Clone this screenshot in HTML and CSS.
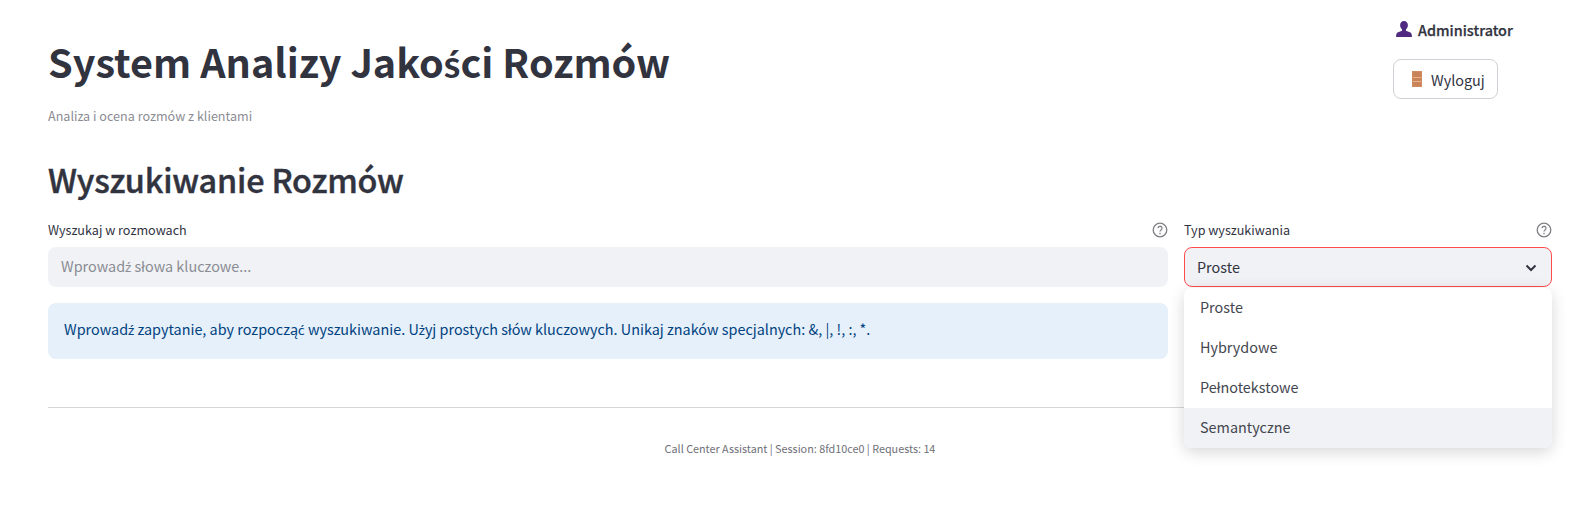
FILE: index.html
```html
<!DOCTYPE html>
<html lang="pl">
<head>
<meta charset="utf-8">
<title>System Analizy Jakości Rozmów</title>
<link rel="stylesheet" href="styles.css">
</head>
<body>
<main class="page">
  <header class="top">
    <div class="titles">
      <h1>System Analizy Jako<span class="dia">ś</span>ci Rozmów</h1>
      <p class="sub">Analiza i ocena rozmów z klientami</p>
    </div>
    <div class="user">
      <div class="who">
        <svg class="bust" viewBox="0 0 16 16"><path fill="#4f2a80" d="M8 0c2.400 0 3.900 1.800 3.900 4.200 0 1.700-.8 3.200-1.900 4.100v1.500l3.800 1.400c1.100.4 1.700 1.200 1.900 2.300l.3 2.500H0l.3-2.500c.2-1.100.8-1.900 1.900-2.300L6 9.800V8.300C4.900 7.400 4.100 5.900 4.100 4.200 4.100 1.800 5.600 0 8 0z"/></svg>
        <span>Administrator</span>
      </div>
      <button class="logout"><svg class="door" viewBox="0 0 10 16"><rect width="10" height="16" fill="#d08c62"/><rect x="1" y="1" width="8" height="14" fill="#c98358"/><rect x="1" y="6" width="8" height="1" fill="#e8b48c"/><rect x="1" y="10" width="8" height="1" fill="#e8b48c"/></svg>Wyloguj</button>
    </div>
  </header>
  <h2>Wyszukiwanie Rozmów</h2>
  <section class="search">
    <div class="col main">
      <div class="lbl"><span>Wyszukaj w rozmowach</span><svg class="help" viewBox="0 0 16 16"><circle cx="8" cy="8" r="6.800" fill="none" stroke="#808188" stroke-width="1.300"/><path d="M6 6.300a2 2 0 1 1 3 1.700c-.7.400-1 .8-1 1.500" fill="none" stroke="#808188" stroke-width="1.300"/><circle cx="8" cy="11.600" r=".8" fill="#808188"/></svg></div>
      <div class="input">Wprowad<span class="dia">ź</span> słowa kluczowe...</div>
      <div class="info">Wprowad<span class="dia">ź</span> zapytanie, aby rozpoczą<span class="dia">ć</span> wyszukiwanie. U<span class="dia">ż</span>yj prostych słów kluczowych. Unikaj znaków specjalnych: &amp;, |, !, :, *.</div>
    </div>
    <div class="col side">
      <div class="lbl"><span>Typ wyszukiwania</span><svg class="help" viewBox="0 0 16 16"><circle cx="8" cy="8" r="6.800" fill="none" stroke="#808188" stroke-width="1.300"/><path d="M6 6.300a2 2 0 1 1 3 1.700c-.7.400-1 .8-1 1.500" fill="none" stroke="#808188" stroke-width="1.300"/><circle cx="8" cy="11.600" r=".8" fill="#808188"/></svg></div>
      <div class="select"><span>Proste</span><svg class="chev" viewBox="0 0 12 12"><path d="M1.500 3.500L6 8l4.500-4.500" fill="none" stroke="#31333f" stroke-width="2"/></svg></div>
      <ul class="menu">
        <li>Proste</li>
        <li>Hybrydowe</li>
        <li>Pełnotekstowe</li>
        <li class="on">Semantyczne</li>
      </ul>
    </div>
  </section>
  <hr>
  <footer>Call Center Assistant | Session: 8fd10ce0 | Requests: 14</footer>
</main>
</body>
</html>
```
FILE: styles.css
```css
* { box-sizing: border-box; }
html, body { margin: 0; height: 100%; background: #fff; overflow: hidden; }
body { font-family: "Noto Sans CJK JP", "Noto Sans", sans-serif; color: #31333f; }
.dia { font-family: Lato, "Noto Sans", sans-serif; font-size: .96em; }
.page { padding: 0 39px 0 48px; width: 1591px; }
.top { display: flex; justify-content: space-between; height: 155px; }
.titles { padding-top: 35px; }
h1 { margin: 0; font-size: 39.6px; line-height: 52px; font-weight: 700; }
.sub { margin: 18px 0 0; font-size: 12.6px; line-height: 17px; color: #8b8c93; }
.user { width: 120px; margin-right: 39px; padding-top: 19px; }
.who { display: flex; align-items: center; gap: 6px; margin-left: 3px; font-size: 14.4px; font-weight: 500; -webkit-text-stroke: .25px #31333f; height: 20px; white-space: nowrap; }
.bust { flex: none; width: 16px; height: 16px; }
.logout { display: flex; align-items: center; gap: 9px; margin-top: 20px; height: 40px; width: 105px; padding: 0 18px; background: #fff; border: 1px solid #d0d1d6; border-radius: 8px; font: inherit; font-size: 14.4px; color: #31333f; }
.door { flex: none; width: 10px; height: 16px; }
h2 { margin: 0; font-size: 32.4px; line-height: 48px; font-weight: 500; -webkit-text-stroke: .45px #31333f; letter-spacing: -.2px; }
.search { display: flex; gap: 16px; margin-top: 15px; }
.main { flex: 0 0 1120px; }
.side { flex: 0 0 368px; position: relative; }
.lbl { display: flex; justify-content: space-between; align-items: center; height: 22px; font-size: 12.6px; margin-bottom: 7px; }
.help { flex: none; width: 16px; height: 16px; margin-top: 1px; }
.input { height: 40px; background: #f0f2f6; border-radius: 8px; padding: 0 13px; line-height: 38px; font-size: 14.4px; color: #8b8c93; }
.info { margin-top: 16px; height: 56px; padding: 0 16px; background: #e6f0fb; border-radius: 8px; line-height: 52px; font-size: 14.4px; color: #004280; }
.select { display: flex; justify-content: space-between; align-items: center; height: 40px; padding: 0 13px 2px 12px; border: 1px solid #ff4b4b; border-radius: 8px; background: #f0f2f6; font-size: 14.4px; }
.chev { flex: none; width: 12px; height: 12px; margin: 3px 1px 0 0; }
.menu { position: absolute; left: 0; right: 0; top: 70px; margin: 0; padding: 0; list-style: none; background: #fff; border-radius: 8px; box-shadow: 0 4px 16px rgba(0,0,0,.16); font-size: 14.4px; color: #44464f; overflow: hidden; }
.menu li { height: 40px; line-height: 38px; padding: 0 16px; }
.menu li.on { background: #f0f2f6; }
hr { margin: 48px 0 0; border: 0; border-top: 1px solid #d6d6d9; }
footer { margin-top: 32px; text-align: center; font-size: 10.8px; color: #6f7079; }
```
